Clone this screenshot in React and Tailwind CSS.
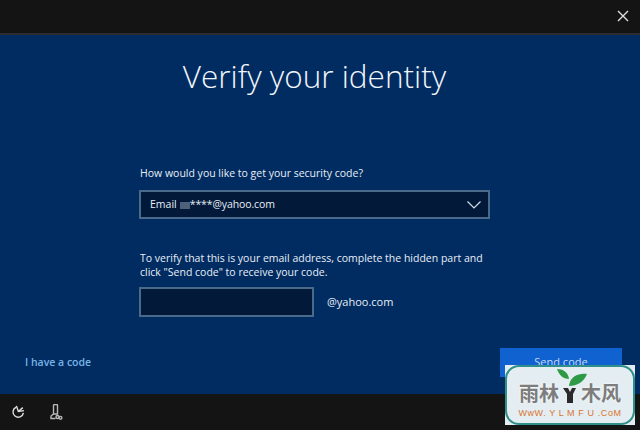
const font = { fontFamily: '"Open Sans", "Noto Sans", sans-serif' };

function ResetIcon() {
  return (
    <svg width="14" height="14" viewBox="0 0 16 16" fill="none" stroke="#e0e0e0" strokeWidth="1.6">
      <path d="M6 2.4a6 6 0 1 0 8.2 6.6" />
      <path d="M6.2 1 8.4 7.4l6.4-1" />
      <path d="M8.4 7.4 13.5 3" />
    </svg>
  );
}

function MicIcon() {
  return (
    <svg width="13" height="16" viewBox="0 0 13 16" fill="none" stroke="#b8b8b8" strokeWidth="1.4">
      <path d="M3.5 1.5a1 1 0 0 1 1-1h2a1 1 0 0 1 1 1v8.5h-4z" />
      <path d="M3.5 10 1 12v2.5h4.5" />
      <circle cx="7.5" cy="13" r="1.5" />
      <circle cx="10.5" cy="13.8" r="1.4" />
    </svg>
  );
}

function Sprout() {
  return (
    <svg width="30" height="34" viewBox="0 0 30 34" className="-ml-[2px] -mr-[6px] shrink-0">
      <path d="M0 0c6 0 11 3 12 10C6 10 2 6 0 0z" fill="#2e9a45" />
      <path d="M30 5c-8-1-17 2-18 12 8 0 15-4 18-12z" fill="#2e9a45" />
      <path d="M6 19h5l2 4 2-4h4l-3 6v9h-6v-9z" fill="#2a2a2a" />
    </svg>
  );
}

function Watermark() {
  return (
    <div className="absolute left-[505px] top-[365px] w-[130px] h-[60px] bg-[#e4edf2]">
      <div className="h-full rounded-[14px] border-2 border-[#2f8f8a] flex flex-col items-center">
        <div className="flex items-end h-[36px] text-[#7d7d7d] text-[20px] leading-[20px] font-bold [text-shadow:0_0_3px_#ffffff]" style={{ fontFamily: '"Noto Sans CJK SC", sans-serif' }}>
          <span>雨林</span>
          <Sprout />
          <span>木风</span>
        </div>
        <div className="mt-[6px] text-[9px] leading-none tracking-[0.6px] text-[#d9752f] whitespace-nowrap" style={{ fontFamily: '"Liberation Sans", sans-serif' }}>
          WwW. Y L M F U .CoM
        </div>
      </div>
    </div>
  );
}

export default function App() {
  return (
    <div className="relative w-[640px] h-[430px] flex flex-col overflow-hidden bg-[#012c62] text-[#e8eef5] text-[11px]" style={font}>
      <div className="h-[35px] shrink-0 bg-[#141414] border-b-2 border-[#2b2d33] flex justify-end items-center pr-[11px] pb-px">
        <svg width="12" height="12" viewBox="0 0 12 12" stroke="#e0e0e0" strokeWidth="1.4">
          <path d="M1 1l10 10M11 1 1 11" />
        </svg>
      </div>

      <div className="flex-1 flex flex-col">
        <h1 className="mt-[17px] pr-[11px] text-center text-[31.5px] leading-[48px] font-light text-[#f2f5f9]">Verify your identity</h1>

        <div className="ml-[139px] w-[351px] mt-[65px]">
          <p className="pl-px leading-[16px] text-[10.5px]">How would you like to get your security code?</p>
          <div className="mt-[9px] h-[29px] flex items-center justify-between pl-[9px] pr-[7px] bg-[#02193a] border-2 border-[#4a6a8c]">
            <span className="flex items-center text-[10.5px]">
              Email
              <span className="ml-[3px] w-[10px] h-[7px] mt-[2px] bg-[#4f6178]" />
              <span className="-tracking-[0.1px]">****@yahoo.com</span>
            </span>
            <svg width="14" height="8" viewBox="0 0 14 8" fill="none" stroke="#d5dde6" strokeWidth="1.2">
              <path d="M0.5 0.5 7 7l6.5-6.5" />
            </svg>
          </div>

          <p className="mt-[32px] pl-px leading-[14px] text-[10.5px]">
            To verify that this is your email address, complete the hidden part and click "Send code" to receive your code.
          </p>
          <div className="mt-[8px] flex items-center gap-[13px]">
            <div className="w-[175px] h-[30px] bg-[#02193a] border-2 border-[#4a6a8c]" />
            <span>@yahoo.com</span>
          </div>
        </div>

        <div className="mt-auto pl-[25px] pr-[18px] flex items-end justify-between">
          <span className="mb-[23px] text-[10.5px] font-semibold text-[#78b4e6]">I have a code</span>
          <div className="w-[122px] h-[29px] mb-[17px] bg-[#0f62d0] flex items-center justify-center text-[#c8daf2]">Send code</div>
        </div>
      </div>

      <div className="h-[36px] shrink-0 bg-[#141414] flex items-center pl-[11px] gap-[25px]">
        <ResetIcon />
        <MicIcon />
      </div>

      <Watermark />
    </div>
  );
}
